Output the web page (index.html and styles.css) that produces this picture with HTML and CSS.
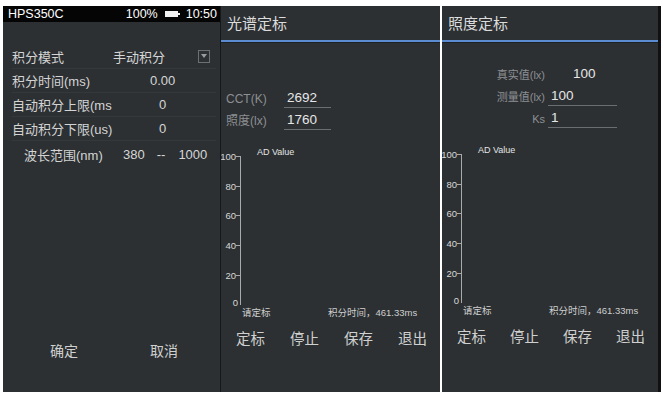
FILE: index.html
```html
<!doctype html>
<html lang="en">
<head>
  <meta charset="utf-8">
  <title>HPS350C</title>
  <link rel="stylesheet" href="styles.css">
</head>
<body>
  <div class="screens">
    <!-- settings screen -->
    <section class="panel panel-settings">
      <div class="statusbar">
        <span class="model">HPS350C</span>
        <span class="batt-pct">100%</span>
        <span class="battery"></span>
        <span class="clock">10:50</span>
      </div>
      <div class="settings">
        <div class="row">
          <span class="label">积分模式</span>
          <span class="value value-mode">手动积分</span>
          <span class="dropdown"></span>
        </div>
        <div class="row">
          <span class="label">积分时间(ms)</span>
          <span class="value value-time">0.00</span>
        </div>
        <div class="row">
          <span class="label">自动积分上限(ms</span>
          <span class="value value-num">0</span>
        </div>
        <div class="row">
          <span class="label">自动积分下限(us)</span>
          <span class="value value-num">0</span>
        </div>
        <div class="row row-range">
          <span class="label">波长范围(nm)</span>
          <span class="range-from">380</span>
          <span class="range-sep">--</span>
          <span class="range-to">1000</span>
        </div>
      </div>
      <div class="actions actions-two">
        <span>确定</span>
        <span>取消</span>
      </div>
    </section>

    <!-- spectrum calibration -->
    <section class="panel panel-cal">
      <div class="title">光谱定标</div>
      <div class="fields fields-spec">
        <div class="field">
          <span class="field-label">CCT(K)</span>
          <span class="field-value">2692</span>
        </div>
        <div class="field">
          <span class="field-label">照度(lx)</span>
          <span class="field-value">1760</span>
        </div>
      </div>
      <svg class="chart" width="219" height="172" viewBox="0 0 219 172">
        <line class="axis" x1="19.5" y1="8" x2="19.5" y2="157"/>
        <g class="ticks">
          <line x1="15" y1="8.5" x2="19" y2="8.5"/>
          <line x1="15" y1="38.5" x2="19" y2="38.5"/>
          <line x1="15" y1="67.5" x2="19" y2="67.5"/>
          <line x1="15" y1="97.5" x2="19" y2="97.5"/>
          <line x1="15" y1="127.5" x2="19" y2="127.5"/>
        </g>
        <g class="tick-labels">
          <text x="15" y="11.5">100</text>
          <text x="15" y="41.5">80</text>
          <text x="15" y="70.5">60</text>
          <text x="15" y="100.5">40</text>
          <text x="15" y="130.5">20</text>
          <text x="17" y="158">0</text>
        </g>
        <text class="chart-title" x="36" y="7">AD Value</text>
        <text class="chart-note" x="21" y="168">请定标</text>
        <text class="chart-note" x="107" y="168">积分时间，461.33ms</text>
      </svg>
      <div class="actions actions-four">
        <span>定标</span>
        <span>停止</span>
        <span>保存</span>
        <span>退出</span>
      </div>
    </section>

    <!-- illuminance calibration -->
    <section class="panel panel-lux">
      <div class="title">照度定标</div>
      <div class="fields fields-lux">
        <div class="field">
          <span class="field-label">真实值(lx)</span>
          <span class="field-value plain">100</span>
        </div>
        <div class="field">
          <span class="field-label">测量值(lx)</span>
          <span class="field-value">100</span>
        </div>
        <div class="field">
          <span class="field-label">Ks</span>
          <span class="field-value">1</span>
        </div>
      </div>
      <svg class="chart" width="219" height="172" viewBox="0 0 219 172">
        <line class="axis" x1="19.5" y1="8" x2="19.5" y2="157"/>
        <g class="ticks">
          <line x1="15" y1="8.5" x2="19" y2="8.5"/>
          <line x1="15" y1="38.5" x2="19" y2="38.5"/>
          <line x1="15" y1="67.5" x2="19" y2="67.5"/>
          <line x1="15" y1="97.5" x2="19" y2="97.5"/>
          <line x1="15" y1="127.5" x2="19" y2="127.5"/>
        </g>
        <g class="tick-labels">
          <text x="15" y="11.5">100</text>
          <text x="15" y="41.5">80</text>
          <text x="15" y="70.5">60</text>
          <text x="15" y="100.5">40</text>
          <text x="15" y="130.5">20</text>
          <text x="17" y="158">0</text>
        </g>
        <text class="chart-title" x="36" y="7">AD Value</text>
        <text class="chart-note" x="21" y="168">请定标</text>
        <text class="chart-note" x="107" y="168">积分时间，461.33ms</text>
      </svg>
      <div class="actions actions-four">
        <span>定标</span>
        <span>停止</span>
        <span>保存</span>
        <span>退出</span>
      </div>
    </section>
  </div>
</body>
</html>
```

FILE: styles.css
```css
html { background:#fff; }
body { margin:0; font-family:"Liberation Sans","Noto Sans CJK SC",sans-serif; color:#d6d6d6; }

.screens { display:flex; margin:6px 0 0 3px; height:386px; }
.panel { background:#2c3033; display:flex; flex-direction:column; }
.panel-settings { width:217px; border-right:1px solid #15181a; }
.panel-cal { width:219px; margin-right:2px; }
.panel-lux { width:216px; border-right:3px solid #111; }

/* status bar */
.statusbar { height:16px; background:#050505; color:#fff; font-size:12.5px; line-height:16px; display:flex; align-items:center; padding:0 3px 0 5px; }
.model { flex:1; }
.batt-pct { margin-right:7px; }
.battery { width:13px; height:6px; background:#f2f2f2; margin-right:8px; position:relative; }
.battery:after { content:""; position:absolute; right:-2px; top:2px; width:2px; height:2px; background:#f2f2f2; }

/* settings list */
.settings { padding-top:23px; }
.row { display:flex; align-items:center; height:23px; margin:0 4px 0 9px; font-size:13px; border-bottom:1px solid #34383b; }
.row .label { width:101px; color:#d4d4d4; }
.value-mode { flex:1; }
.value-time { padding-left:37px; }
.value-num { padding-left:46px; }
.dropdown { width:10px; height:11px; border:1px solid #6d7073; margin-right:6px; position:relative; }
.dropdown:after { content:""; position:absolute; left:2px; top:3px; border-left:3px solid transparent; border-right:3px solid transparent; border-top:4px solid #9a9c9e; }
.row-range { border-bottom:0; margin-left:21px; height:26px; }
.row-range .label { width:99px; }
.range-sep { margin:0 13px 0 12px; }

.actions { margin-top:auto; display:flex; font-size:14px; color:#d0d0d0; }
.actions-two { padding:0 0 32px 47px; }
.actions-two span + span { margin-left:72px; }

/* calibration panels */
.title { height:34px; line-height:36px; font-size:15px; padding-left:6px; color:#dcdcdc; border-bottom:2px solid #5b8bd0; box-shadow:0 1px 0 #1e2123; }
.fields { display:flex; flex-direction:column; }
.field { display:flex; align-items:flex-end; height:22px; }
.field-label { font-size:11px; color:#8c8f92; line-height:18px; }
.field-value { font-size:13.5px; color:#e6e6e6; border-bottom:1px solid #6b6e71; line-height:18px; height:18px; }
.field-value.plain { border-bottom-color:transparent; }

.fields-spec { padding:44px 0 0 5px; }
.fields-spec .field-label { width:58px; font-size:12px; }
.fields-spec .field-value { width:44px; padding-left:3px; }

.fields-lux { padding:20px 0 0 0; }
.fields-lux .field-label { width:103px; text-align:right; }
.fields-lux .field-value { margin-left:3px; width:66px; padding-left:3px; }
.fields-lux .field:first-child .field-value { padding-left:25px; }

.chart { display:block; margin-top:18px; }
.axis { stroke:#a8aaac; stroke-width:1; }
.ticks line { stroke:#a8aaac; stroke-width:1; }
.tick-labels text { fill:#d8d8d8; font-size:9.5px; text-anchor:end; font-family:"Liberation Sans",sans-serif; }
.chart-title { fill:#e4e4e4; font-size:9px; }
.chart-note { fill:#cfcfcf; font-size:9.5px; font-family:"Liberation Sans","Noto Sans CJK SC",sans-serif; }

.actions-four { margin-top:7px; justify-content:space-between; padding:0 13px 0 15px; font-size:14.5px; }
```
